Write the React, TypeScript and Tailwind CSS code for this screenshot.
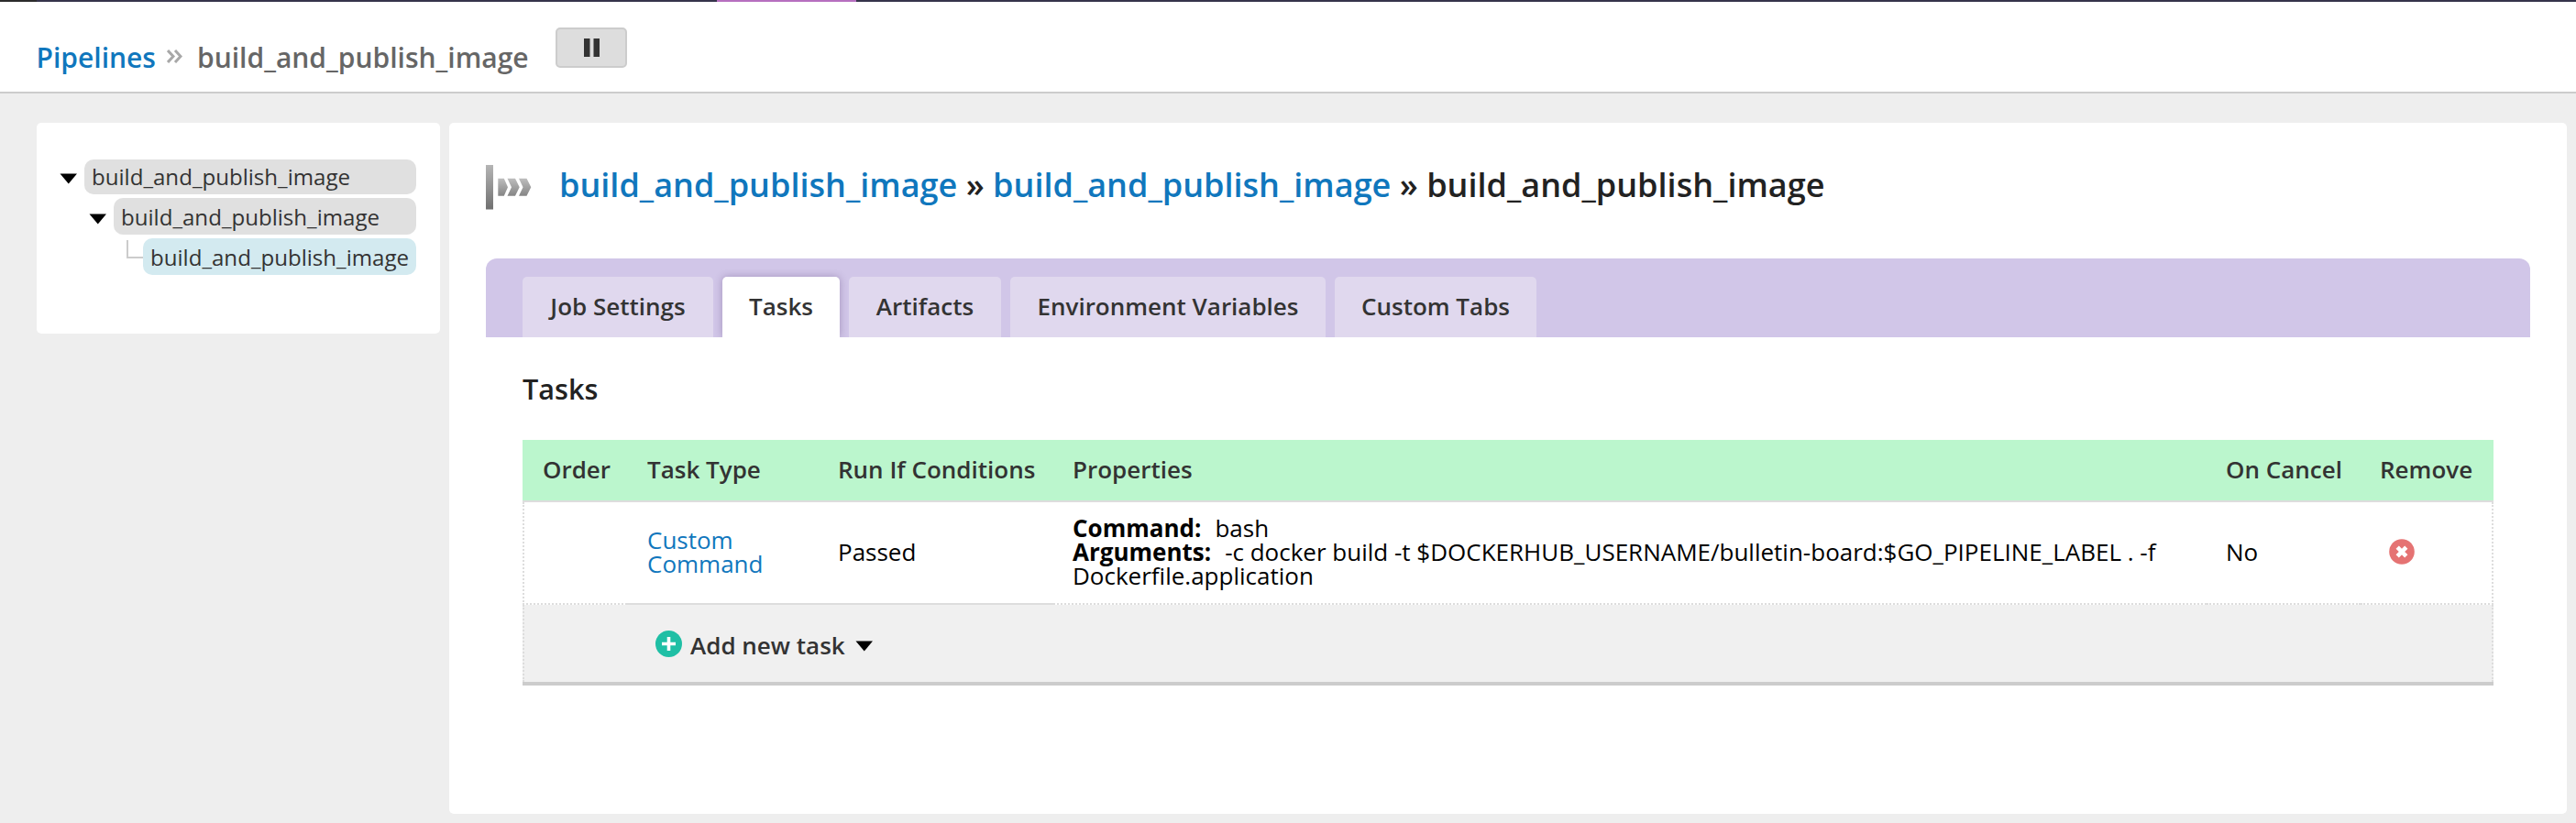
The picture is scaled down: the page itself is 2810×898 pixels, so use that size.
import React from "react";

const NAME = "build_and_publish_image";

function Caret({ className = "" }: { className?: string }) {
  return (
    <svg viewBox="0 0 20 12" className={`h-3 w-5 shrink-0 ${className}`}>
      <path d="M0.5 0.5H19L9.800 11.5Z" fill="#000" />
    </svg>
  );
}

function Header() {
  return (
    <header className="h-[102px] border-b-2 border-[#cccccc] bg-white">
      <div className="flex h-[2px] bg-[#35334b]">
        <div className="w-10 bg-[#2b2b2b]" />
        <div className="ml-[742px] w-[152px] bg-[#b66fbf]" />
      </div>
      <div className="flex pl-[39.500px] text-[30px] leading-[40px] font-semibold">
        <a className="mt-[41px] w-[131px] whitespace-nowrap text-[#1077bd]">Pipelines</a>
        <svg viewBox="0 0 17 15" className="mt-[52px] ml-[11.500px] h-[15px] w-[17px]">
          <path d="M1 1L7 7.5L1 14M9 1L15 7.5L9 14" fill="none" stroke="#a8a8a8" strokeWidth="3" />
        </svg>
        <span className="mt-[41px] ml-[16px] w-[362px] whitespace-nowrap text-[#666666]">{NAME}</span>
        <button className="mt-7 ml-[29px] flex h-11 w-[78px] items-center justify-center rounded-[5px] border-2 border-[#cccccc] bg-[#dddddd]">
          <svg viewBox="0 0 17 20" className="h-5 w-[17px]">
            <path d="M0 0H6.500V20H0ZM10.500 0H17V20H10.500Z" fill="#333" />
          </svg>
        </button>
      </div>
    </header>
  );
}

function Tree() {
  return (
    <aside className="flex h-[230px] w-[440px] flex-col gap-1 rounded-[5px] bg-white pt-10 pr-[26px] text-[24.100px] leading-[38px] text-[#333333]">
      <div className="flex h-[38px] items-start pl-[25px]">
        <Caret className="mt-[15px]" />
        <div className="ml-[7px] h-full flex-1 rounded-[10px] bg-[#e0e0e0] pl-2">{NAME}</div>
      </div>
      <div className="flex h-10 items-start pl-[57px]">
        <Caret className="mt-[17px]" />
        <div className="ml-[7px] h-full flex-1 rounded-[10px] bg-[#e0e0e0] pt-0.5 pl-2">{NAME}</div>
      </div>
      <div className="flex h-10 pl-[98px]">
        <div className="mt-0.5 h-5 w-[18px] border-b-2 border-l-2 border-[#cccccc]" />
        <div className="h-full flex-1 rounded-[10px] bg-[#d3eaf0] pt-0.5 pl-2">{NAME}</div>
      </div>
    </aside>
  );
}

function JobIcon() {
  return (
    <svg viewBox="0 0 50 52" className="h-[52px] w-[50px] shrink-0">
      <defs>
        <linearGradient id="bar" x1="0" y1="0" x2="0" y2="1">
          <stop offset="0" stopColor="#b5b5b5" />
          <stop offset="1" stopColor="#707070" />
        </linearGradient>
        <linearGradient id="arrow" x1="0" y1="0" x2="0" y2="1">
          <stop offset="0" stopColor="#bdbdbd" />
          <stop offset="1" stopColor="#858585" />
        </linearGradient>
      </defs>
      <rect x="0" y="1" width="8" height="48.500" fill="url(#bar)" />
      <path d="M13.300 15.800H19.800L24 25.300L19.800 34.800H13.300ZM23.500 15.800H32L36.700 25.300L32 34.800H23.500L28 25.300ZM36 15.800H44.500L49.300 25.300L44.500 34.800H36L40.500 25.300Z" fill="url(#arrow)" />
    </svg>
  );
}

function Tab({ label, width, active = false }: { label: string; width: string; active?: boolean }) {
  const look = active ? "bg-white shadow-[0_0_8px_rgba(60,30,90,0.3)]" : "bg-[#e0d8ee]";
  return <div className={`h-[66px] rounded-t-[5px] text-center ${width} ${look}`}>{label}</div>;
}

function TaskTable() {
  const cols = "grid grid-cols-[114px_208px_257px_1258px_168px_145px]";
  const cell = "flex items-center border-b-2 border-[#dddddd] pb-[3px]";
  return (
    <section className="w-[2150px] text-[26px]">
      <div className={`${cols} h-[68px] border-b-2 border-[#dddddd] bg-[#bbf6cd] leading-[64px] font-semibold text-[#333333]`}>
        <span className="pl-[22px]">Order</span>
        <span className="pl-[22px]">Task Type</span>
        <span className="pl-[22px]">Run If Conditions</span>
        <span className="pl-[21px]">Properties</span>
        <span className="pl-[21px]">On Cancel</span>
        <span className="pl-[21px]">Remove</span>
      </div>
      <div className={`${cols} h-[112px] bg-white leading-[26px] text-black`}>
        <span className={`${cell} border-l-2 border-dotted`} />
        <div className={`${cell} border-solid`}>
          <a className="w-[180px] pl-[22px] text-[#1077bd]">Custom Command</a>
        </div>
        <span className={`${cell} border-solid pl-[22px]`}>Passed</span>
        <div className={`${cell} border-dotted pl-[21px]`}>
          <div>
            <p><b>Command:</b><span className="ml-[15px]">bash</span></p>
            <p className="w-[1215px]">
              <b>Arguments:</b>
              <span className="ml-[15px]">-c docker build -t $DOCKERHUB_USERNAME/bulletin-board:$GO_PIPELINE_LABEL . -f Dockerfile.application</span>
            </p>
          </div>
        </div>
        <span className={`${cell} border-dotted pl-[21px]`}>No</span>
        <div className={`${cell} border-r-2 border-dotted pl-[31px]`}>
          <svg viewBox="0 0 28 28" className="h-7 w-7">
            <circle cx="14" cy="14" r="13.800" fill="#e57373" />
            <path d="M9.200 9.200L18.800 18.800M18.800 9.200L9.200 18.800" stroke="#fff" strokeWidth="4.600" />
          </svg>
        </div>
      </div>
      <div className="border-b-4 border-[#cccccc]">
        <div className="flex h-[84px] border-x-2 border-dotted border-[#dddddd] bg-[#f0f0f0] pl-[143px] font-semibold text-[#333333]">
          <svg viewBox="0 0 30 30" className="mt-7 h-[30px] w-[30px]">
            <circle cx="14.500" cy="14.500" r="14.500" fill="#1fbfa5" />
            <path d="M14.500 7V22M7 14.500H22" stroke="#fff" strokeWidth="3.600" />
          </svg>
          <span className="mt-[27px] ml-[8px] w-[169px] leading-[34px] whitespace-nowrap">Add new task</span>
          <Caret className="mt-[39px] ml-[11px]" />
        </div>
      </div>
    </section>
  );
}

export default function App() {
  return (
    <div className="h-[898px] w-[2810px] overflow-hidden bg-[#eeeeee] font-['Open_Sans',sans-serif]">
      <Header />
      <div className="flex items-start gap-[10px] pt-8 pl-10">
        <Tree />
        <main className="h-[754px] w-[2310px] rounded-[5px] bg-white px-10">
          <h1 className="flex h-[148px] pt-[45px] text-[36.040px] leading-[44px] font-semibold whitespace-pre text-[#222222]">
            <JobIcon />
            <span className="ml-[30px]">
              <a className="text-[#1077bd]">{NAME}</a> » <a className="text-[#1077bd]">{NAME}</a> » {NAME}
            </span>
          </h1>
          <nav className="flex h-[86px] gap-[10px] overflow-hidden rounded-t-[12px] bg-[#d1c6e8] pt-5 pl-10 text-[26px] leading-[64px] font-semibold text-[#333333]">
            <Tab label="Job Settings" width="w-[208px]" />
            <Tab label="Tasks" width="w-[128px]" active />
            <Tab label="Artifacts" width="w-[166px]" />
            <Tab label="Environment Variables" width="w-[344px]" />
            <Tab label="Custom Tabs" width="w-[220px]" />
          </nav>
          <div className="px-10">
            <h2 className="h-[112px] pt-[38px] text-[30.600px] leading-[36px] font-semibold text-[#222222]">Tasks</h2>
            <TaskTable />
          </div>
        </main>
      </div>
    </div>
  );
}
